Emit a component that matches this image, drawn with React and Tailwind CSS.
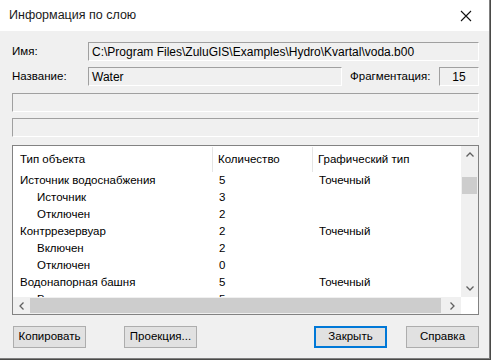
import React from "react";

const F = { fontFamily: "Tahoma, 'Liberation Sans', Arial, sans-serif" };

function Field({ className = "", children }) {
  return (
    <div
      className={
        "h-[19px] border-t border-l border-t-[#a0a0a0] border-l-[#a0a0a0] border-b border-r border-b-white border-r-white bg-[#f0f0f0] flex items-center " +
        className
      }
    >
      {children}
    </div>
  );
}

const rows = [
  ["Источник водоснабжения", "5", "Точечный", false],
  ["Источник", "3", "", true],
  ["Отключен", "2", "", true],
  ["Контррезервуар", "2", "Точечный", false],
  ["Включен", "2", "", true],
  ["Отключен", "0", "", true],
  ["Водонапорная башня", "5", "Точечный", false],
  ["Включен", "5", "", true],
];

function Btn({ children, primary, className = "" }) {
  return (
    <button
      className={
        "w-[73px] h-[22px] bg-[#e1e1e1] text-[11.5px] text-black flex items-center justify-center " +
        (primary ? "border-2 border-[#0078d7] " : "border border-[#adadad] ") +
        className
      }
    >
      {children}
    </button>
  );
}

export default function App() {
  return (
    <div className="w-[491px] h-[360px] bg-[#4a4a48] text-black text-[11.5px]" style={F}>
      <div className="w-[490px] h-[359px] bg-[#f0f0f0] border-r border-b border-[#7f7f7f] flex flex-col">
        <div className="h-[31px] bg-white flex items-center justify-between shrink-0">
          <span
            className="pl-[9px] text-[12.5px] text-[#1a1a1a]"
            style={{ fontFamily: "'Liberation Sans', Arial, sans-serif" }}
          >
            Информация по слою
          </span>
          <svg width="12" height="12" viewBox="0 0 12 12" className="mr-[17px]">
            <path d="M1 1 L11 11 M11 1 L1 11" stroke="#111" strokeWidth="1.1" fill="none" />
          </svg>
        </div>
        <div className="flex flex-col pl-[12px] pr-[10px]">
          <div className="flex items-center mt-[11px]">
            <span className="w-[76px]">Имя:</span>
            <Field className="flex-1 pl-[3px] text-[12px]">C:\Program Files\ZuluGIS\Examples\Hydro\Kvartal\voda.b00</Field>
          </div>
          <div className="flex items-center mt-[6px]">
            <span className="w-[76px]">Название:</span>
            <Field className="w-[254px] pl-[3px] text-[12px]">Water</Field>
            <span className="ml-[8px] w-[89px]">Фрагментация:</span>
            <Field className="w-[40px] justify-center text-[12px]">15</Field>
          </div>
          <Field className="mt-[7px]" />
          <Field className="mt-[6px]" />
          <div className="mt-[8px] h-[170px] border border-[#828282] bg-white flex flex-col">
            <div className="flex flex-1 min-h-0">
              <div className="flex-1 flex flex-col overflow-hidden">
                <div className="h-[26px] flex items-center shrink-0 pt-[1px]">
                  <div className="w-[200px] pl-[7px] border-r border-[#e5e5e5] h-full flex items-center">Тип объекта</div>
                  <div className="w-[100px] pl-[5px] border-r border-[#e5e5e5] h-full flex items-center">Количество</div>
                  <div className="flex-1 pl-[5px] h-full flex items-center">Графический тип</div>
                </div>
                {rows.map((r, i) => (
                  <div key={i} className="h-[17px] flex items-center shrink-0">
                    <div className={"w-[200px] " + (r[3] ? "pl-[24px]" : "pl-[7px]")}>{r[0]}</div>
                    <div className="w-[100px] pl-[6px]">{r[1]}</div>
                    <div className="flex-1 pl-[6px]">{r[2]}</div>
                  </div>
                ))}
              </div>
              <div className="w-[17px] bg-[#f0f0f0] flex flex-col items-center shrink-0">
                <div className="h-[17px] flex items-center justify-center">
                  <svg width="8" height="5" viewBox="0 0 8 5"><path d="M0.5 4.5 L4 1 L7.5 4.5" stroke="#606060" strokeWidth="1.3" fill="none" /></svg>
                </div>
                <div className="mt-[14px] w-[15px] h-[17px] bg-[#cdcdcd]" />
                <div className="flex-1" />
                <div className="h-[17px] flex items-center justify-center">
                  <svg width="8" height="5" viewBox="0 0 8 5"><path d="M0.5 0.5 L4 4 L7.5 0.5" stroke="#606060" strokeWidth="1.3" fill="none" /></svg>
                </div>
              </div>
            </div>
            <div className="h-[17px] flex shrink-0">
              <div className="flex-1 bg-[#f0f0f0] flex items-center">
                <div className="w-[17px] h-full flex items-center justify-center">
                  <svg width="5" height="8" viewBox="0 0 5 8"><path d="M4.5 0.5 L1 4 L4.5 7.5" stroke="#606060" strokeWidth="1.3" fill="none" /></svg>
                </div>
                <div className="w-[411px] h-[15px] bg-[#cdcdcd]" />
                <div className="flex-1" />
                <div className="w-[17px] h-full flex items-center justify-center">
                  <svg width="5" height="8" viewBox="0 0 5 8"><path d="M0.5 0.5 L4 4 L0.5 7.5" stroke="#606060" strokeWidth="1.3" fill="none" /></svg>
                </div>
              </div>
              <div className="w-[17px] bg-white" />
            </div>
          </div>
          <div className="flex mt-[11px] pl-[1px]">
            <Btn>Копировать</Btn>
            <Btn className="ml-[38px]">Проекция...</Btn>
            <Btn primary className="ml-[117px]">Закрыть</Btn>
            <Btn className="ml-[19px]">Справка</Btn>
          </div>
        </div>
      </div>
    </div>
  );
}
